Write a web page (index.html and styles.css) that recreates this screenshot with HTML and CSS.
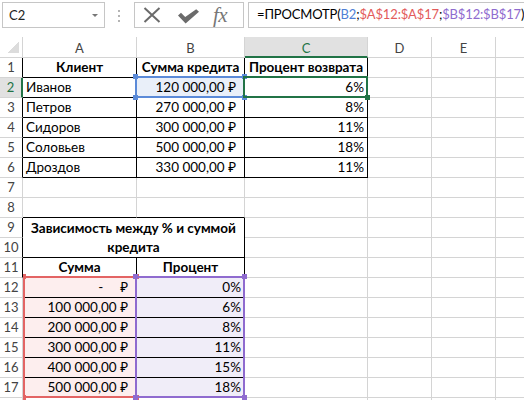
FILE: index.html
```html
<!DOCTYPE html>
<html lang="ru">
<head>
<meta charset="utf-8">
<title>Excel</title>
<link rel="stylesheet" href="styles.css">
</head>
<body>
<div class="app">
  <div class="fbar">
    <div class="namebox"><span>C2</span><span class="caret"></span></div>
    <div class="grip"><i></i><i></i><i></i></div>
    <div class="fbtns">
      <svg class="ic-x" width="18" height="16" viewBox="0 0 18 16"><path d="M1.5 1 L16.5 15 M16.5 1 L1.5 15" stroke="#6b6b6b" stroke-width="2" fill="none"/></svg>
      <svg class="ic-ok" width="23" height="15" viewBox="0 0 23 15"><path d="M1 6.5 L4 3.8 L8.2 8 L19.2 0.3 L22 2.8 L8.6 14.6 Z" fill="#6b6b6b"/></svg>
      <span class="fx">fx</span>
    </div>
    <div class="formula">=ПРОСМОТР(<span class="rb">B2</span>;<span class="rr">$A$12:$A$17</span>;<span class="rp">$B$12:$B$17</span>)</div>
  </div>
  <div class="sheet">
    <div class="c h corner"></div><div class="c h">A</div><div class="c h">B</div><div class="c h selc">C</div><div class="c h">D</div><div class="c h">E</div><div class="c h"></div>

    <div class="c rh kr">1</div><div class="c k b">Клиент</div><div class="c k b">Сумма кредита</div><div class="c k b">Процент возврата</div><div class="c"></div><div class="c"></div><div class="c"></div>

    <div class="c rh selr">2</div><div class="c k">Иванов</div><div class="c k acc fb host">120 000,00 ₽<div class="ov ov-blue"><i class="sq qb tl"></i><i class="sq qb tr"></i><i class="sq qb bl"></i><i class="sq qb br"></i></div></div><div class="c k num host">6%<div class="ov ov-green"><i class="handle"></i></div></div><div class="c"></div><div class="c"></div><div class="c"></div>

    <div class="c rh kr">3</div><div class="c k">Петров</div><div class="c k acc">270 000,00 ₽</div><div class="c k num">8%</div><div class="c"></div><div class="c"></div><div class="c"></div>

    <div class="c rh kr">4</div><div class="c k">Сидоров</div><div class="c k acc">300 000,00 ₽</div><div class="c k num">11%</div><div class="c"></div><div class="c"></div><div class="c"></div>

    <div class="c rh kr">5</div><div class="c k">Соловьев</div><div class="c k acc">500 000,00 ₽</div><div class="c k num">18%</div><div class="c"></div><div class="c"></div><div class="c"></div>

    <div class="c rh kr">6</div><div class="c k">Дроздов</div><div class="c k acc">330 000,00 ₽</div><div class="c k num">11%</div><div class="c"></div><div class="c"></div><div class="c"></div>

    <div class="c rh">7</div><div class="c"></div><div class="c"></div><div class="c"></div><div class="c"></div><div class="c"></div><div class="c"></div>

    <div class="c rh">8</div><div class="c kb"></div><div class="c kb"></div><div class="c"></div><div class="c"></div><div class="c"></div><div class="c"></div>

    <div class="c rh kr">9</div><div class="c k b merged">Зависимость между % и суммой кредита</div><div class="c"></div><div class="c"></div><div class="c"></div><div class="c"></div>

    <div class="c rh kr">10</div><div class="c"></div><div class="c"></div><div class="c"></div><div class="c"></div>

    <div class="c rh kr">11</div><div class="c k b">Сумма</div><div class="c k b">Процент</div><div class="c"></div><div class="c"></div><div class="c"></div><div class="c"></div>

    <div class="c rh">12</div><div class="c k acc fr host"><span class="dash">-</span>₽<div class="ov ov-red"><i class="sq qr ltl"></i><i class="sq qr tr"></i><i class="sq qr lbl"></i><i class="sq qr br"></i></div></div><div class="c k num fp host">0%<div class="ov ov-purple"><i class="sq qp tl"></i><i class="sq qp tr"></i><i class="sq qp bl"></i><i class="sq qp br"></i></div></div><div class="c"></div><div class="c"></div><div class="c"></div><div class="c"></div>

    <div class="c rh">13</div><div class="c k acc fr">100 000,00 ₽</div><div class="c k num fp">6%</div><div class="c"></div><div class="c"></div><div class="c"></div><div class="c"></div>

    <div class="c rh">14</div><div class="c k acc fr">200 000,00 ₽</div><div class="c k num fp">8%</div><div class="c"></div><div class="c"></div><div class="c"></div><div class="c"></div>

    <div class="c rh">15</div><div class="c k acc fr">300 000,00 ₽</div><div class="c k num fp">11%</div><div class="c"></div><div class="c"></div><div class="c"></div><div class="c"></div>

    <div class="c rh">16</div><div class="c k acc fr">400 000,00 ₽</div><div class="c k num fp">15%</div><div class="c"></div><div class="c"></div><div class="c"></div><div class="c"></div>

    <div class="c rh">17</div><div class="c k acc fr">500 000,00 ₽</div><div class="c k num fp">18%</div><div class="c"></div><div class="c"></div><div class="c"></div><div class="c"></div>

    <div class="c rh"></div><div class="c"></div><div class="c"></div><div class="c"></div><div class="c"></div><div class="c"></div><div class="c"></div>
  </div>
</div>
</body>
</html>
```
FILE: styles.css
```css
html, body {
  margin: 0;
  padding: 0;
  height: 100%;
  overflow: hidden;
  background: #fff;
}
body {
  font-family: Lato, "Noto Sans", sans-serif;
  color: #000;
}
.app {
  width: 524px;
  height: 400px;
  overflow: hidden;
}

/* formula bar */
.fbar {
  height: 37px;
  box-sizing: border-box;
  padding-top: 2px;
  display: flex;
  align-items: flex-start;
}
.namebox {
  margin-left: 2px;
  width: 103px;
  height: 26px;
  box-sizing: border-box;
  border: 1px solid #c6c6c6;
  padding: 0 6px;
  display: flex;
  align-items: center;
  justify-content: space-between;
  font-size: 13px;
  color: #222;
}
.caret {
  width: 0;
  height: 0;
  border-left: 3px solid transparent;
  border-right: 3px solid transparent;
  border-top: 3px solid #777;
}
.grip {
  margin-left: 13px;
  margin-top: 8px;
  display: flex;
  flex-direction: column;
  gap: 3px;
}
.grip i {
  display: block;
  width: 2px;
  height: 2px;
  background: #b4b4b4;
}
.fbtns {
  margin-left: 14px;
  width: 110px;
  height: 26px;
  box-sizing: border-box;
  border: 1px solid #c6c6c6;
  display: flex;
  align-items: center;
  padding-left: 8px;
}
.ic-x { display: block; }
.ic-ok { display: block; margin-left: 16px; margin-top: 2px; }
.fx {
  margin-left: 13px;
  font-family: "Liberation Serif", serif;
  font-style: italic;
  font-size: 21px;
  color: #777;
  line-height: 20px;
  letter-spacing: -0.5px;
}
.formula {
  margin-left: 4px;
  flex: 1;
  min-width: 0;
  height: 26px;
  box-sizing: border-box;
  border: 1px solid #c6c6c6;
  border-right: none;
  padding-left: 8px;
  font-size: 13px;
  letter-spacing: -0.15px;
  line-height: 23px;
  white-space: nowrap;
  overflow: hidden;
  color: #000;
}
.rb { color: #4f7fd6; }
.rr { color: #e35b5b; }
.rp { color: #8f6bcf; }

/* sheet grid */
.sheet {
  display: grid;
  grid-template-columns: 23px 114px 108px 123px 64px 64px 64px;
  grid-template-rows: 21px;
  grid-auto-rows: 20px;
  font-size: 13.5px;
}
.c {
  box-sizing: border-box;
  border-right: 1px solid #d4d4d4;
  border-bottom: 1px solid #d4d4d4;
  padding: 0 3px;
  line-height: 19px;
  white-space: nowrap;
}
.h {
  text-align: center;
  color: #444;
  font-size: 13px;
  padding-top: 2px;
  line-height: 18px;
}
.corner {
  background: linear-gradient(to top left, #dcdcdc 50%, transparent 50%) no-repeat;
  background-size: 12px 12px;
  background-position: right 3px bottom 4px;
}
.rh {
  text-align: center;
  color: #444;
  font-size: 13px;
  padding: 0;
}
.selc {
  background: #e1e1e1;
  color: #217346;
  border-bottom: 2px solid #217346;
}
.selr {
  background: #e1e1e1;
  color: #217346;
  border-right: 2px solid #217346;
}
.k { border-right-color: #000; border-bottom-color: #000; }
.kb { border-bottom-color: #000; }
.kr { border-right-color: #000; }
.b { font-weight: 700; text-align: center; }
.num { text-align: right; }
.acc { text-align: right; padding-right: 8px; }
.merged {
  grid-column: span 2;
  grid-row: span 2;
  white-space: normal;
  padding-top: 1px;
  line-height: 19px;
}
.dash { margin-right: 17px; }
.fb { background: #e9eff9; }
.fr { background: #fdeeee; }
.fp { background: #f0edf8; }

/* reference / selection overlays */
.host { position: relative; }
.ov {
  position: absolute;
  z-index: 2;
  box-sizing: border-box;
}
.ov-blue {
  left: -2px; top: -2px;
  width: 110px; height: 22px;
  border: 2px solid #5b8ad8;
}
.ov-green {
  left: -2px; top: -2px;
  width: 125px; height: 22px;
  border: 2px solid #217346;
}
.ov-red {
  left: 0; top: -2px;
  width: 114px; height: 122px;
  border: 2px solid #e36464;
}
.ov-purple {
  left: -2px; top: -2px;
  width: 110px; height: 122px;
  border: 2px solid #8f6bcf;
}
.sq {
  position: absolute;
  width: 5px;
  height: 5px;
}
.qb { background: #5b8ad8; }
.qr { background: #e36464; }
.qp { background: #8f6bcf; }
.tl { left: -4px; top: -4px; }
.tr { right: -4px; top: -4px; }
.bl { left: -4px; bottom: -4px; }
.br { right: -4px; bottom: -4px; }
.ltl { left: -2px; top: -4px; width: 3px; }
.lbl { left: -2px; bottom: -4px; width: 3px; }
.handle {
  position: absolute;
  right: -4px;
  bottom: -4px;
  width: 5px;
  height: 5px;
  background: #217346;
}
```
